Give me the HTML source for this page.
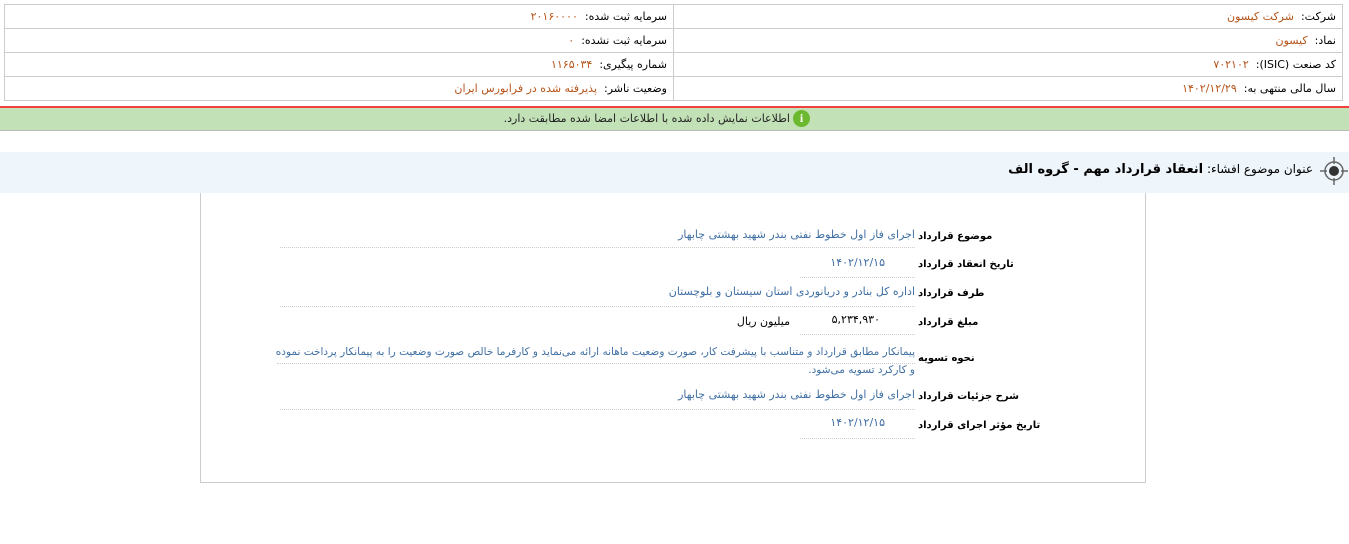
<!DOCTYPE html>
<html><head><meta charset="utf-8"><style>
body{margin:0;width:1349px;height:544px;background:#fff;position:relative;overflow:hidden;font-family:"DejaVu Sans","Liberation Sans",sans-serif;font-size:11px;color:#000}
.a{position:absolute;white-space:nowrap;direction:rtl}
.l{position:absolute;white-space:nowrap;direction:rtl;left:918px;font-weight:bold;font-size:10px}
.o{color:#b5541a}
.b{color:#3f6fa3}
.d{position:absolute;border-top:1px dotted #ccc;height:0}
table{position:absolute;left:4px;top:4px;width:1339px;border-collapse:collapse;direction:rtl}
td{border:1px solid #ccc;height:23px;padding:0 6px;direction:rtl;text-align:right;font-size:11px}
</style></head><body>
<table>
<tr><td style="width:656px">شرکت: &nbsp;<span class="o">شرکت کیسون</span></td><td>سرمایه ثبت شده: &nbsp;<span class="o">۲۰۱۶۰۰۰۰</span></td></tr>
<tr><td>نماد: &nbsp;<span class="o">کیسون</span></td><td>سرمایه ثبت نشده: &nbsp;<span class="o">۰</span></td></tr>
<tr><td>کد صنعت (ISIC): &nbsp;<span class="o">۷۰۲۱۰۲</span></td><td>شماره پیگیری: &nbsp;<span class="o">۱۱۶۵۰۳۴</span></td></tr>
<tr><td>سال مالی منتهی به: &nbsp;<span class="o">۱۴۰۲/۱۲/۲۹</span></td><td>وضعیت ناشر: &nbsp;<span class="o">پذیرفته شده در فرابورس ایران</span></td></tr>
</table>
<div style="position:absolute;left:0;top:106px;width:1349px;height:2px;background:#f04040"></div>
<div style="position:absolute;left:0;top:108px;width:1349px;height:22px;background:#c3e1b7;border-bottom:1px solid #bbb"></div>
<div class="a" style="right:559px;top:112px;color:#222">اطلاعات نمایش داده شده با اطلاعات امضا شده مطابقت دارد.</div>
<div style="position:absolute;left:793px;top:110px;width:17px;height:17px;border-radius:50%;background:#6cb92f;color:#fff;font-weight:bold;font-size:12px;text-align:center;line-height:17px;font-family:'Liberation Serif',serif">i</div>
<div style="position:absolute;left:0;top:152px;width:1349px;height:41px;background:#eef5fb"></div>
<svg style="position:absolute;left:1318px;top:155px" width="32" height="32" viewBox="0 0 32 32"><circle cx="16" cy="16" r="9" fill="none" stroke="#666" stroke-width="1.5"/><circle cx="16" cy="16" r="5" fill="#333"/><path d="M16 2v7M16 23v7M2 16h7M23 16h7" stroke="#666" stroke-width="1.5"/></svg>
<div class="a" style="right:36px;top:162px;font-size:12px">عنوان موضوع افشاء: <b style="font-size:13px">انعقاد قرارداد مهم - گروه الف</b></div>
<div style="position:absolute;left:200px;top:193px;width:944px;height:289px;border:1px solid #ccc;border-top:none"></div>
<div class="l" style="top:231px">موضوع قرارداد</div>
<div class="a b" style="right:434px;top:228px">اجرای فاز اول خطوط نفتی بندر شهید بهشتی چابهار</div>
<div class="d" style="left:280px;width:635px;top:247px"></div>
<div class="l" style="top:259px">تاریخ انعقاد قرارداد</div>
<div class="a b" style="right:464px;top:256px">۱۴۰۲/۱۲/۱۵</div>
<div class="d" style="left:800px;width:115px;top:277px"></div>
<div class="l" style="top:288px">طرف قرارداد</div>
<div class="a b" style="right:434px;top:285px">اداره کل بنادر و دریانوردی استان سیستان و بلوچستان</div>
<div class="d" style="left:280px;width:635px;top:306px"></div>
<div class="l" style="top:317px">مبلغ قرارداد</div>
<div class="a" style="right:469px;top:313px">۵,۲۳۴,۹۳۰</div>
<div class="a" style="right:559px;top:315px">میلیون ریال</div>
<div class="d" style="left:800px;width:115px;top:334px"></div>
<div class="l" style="top:353px">نحوه تسویه</div>
<div class="a b" style="right:434px;top:343px;width:640px;white-space:normal;line-height:18px;text-align:right;font-size:10.5px">پیمانکار مطابق قرارداد و متناسب با پیشرفت کار، صورت وضعیت ماهانه ارائه می‌نماید و کارفرما خالص صورت وضعیت را به پیمانکار پرداخت نموده و کارکرد تسویه می‌شود.</div>
<div class="d" style="left:277px;width:638px;top:363px"></div>
<div class="l" style="top:391px">شرح جزئیات قرارداد</div>
<div class="a b" style="right:434px;top:388px">اجرای فاز اول خطوط نفتی بندر شهید بهشتی چابهار</div>
<div class="d" style="left:280px;width:635px;top:409px"></div>
<div class="l" style="top:420px">تاریخ مؤثر اجرای قرارداد</div>
<div class="a b" style="right:464px;top:416px">۱۴۰۲/۱۲/۱۵</div>
<div class="d" style="left:800px;width:115px;top:438px"></div>
</body></html>
